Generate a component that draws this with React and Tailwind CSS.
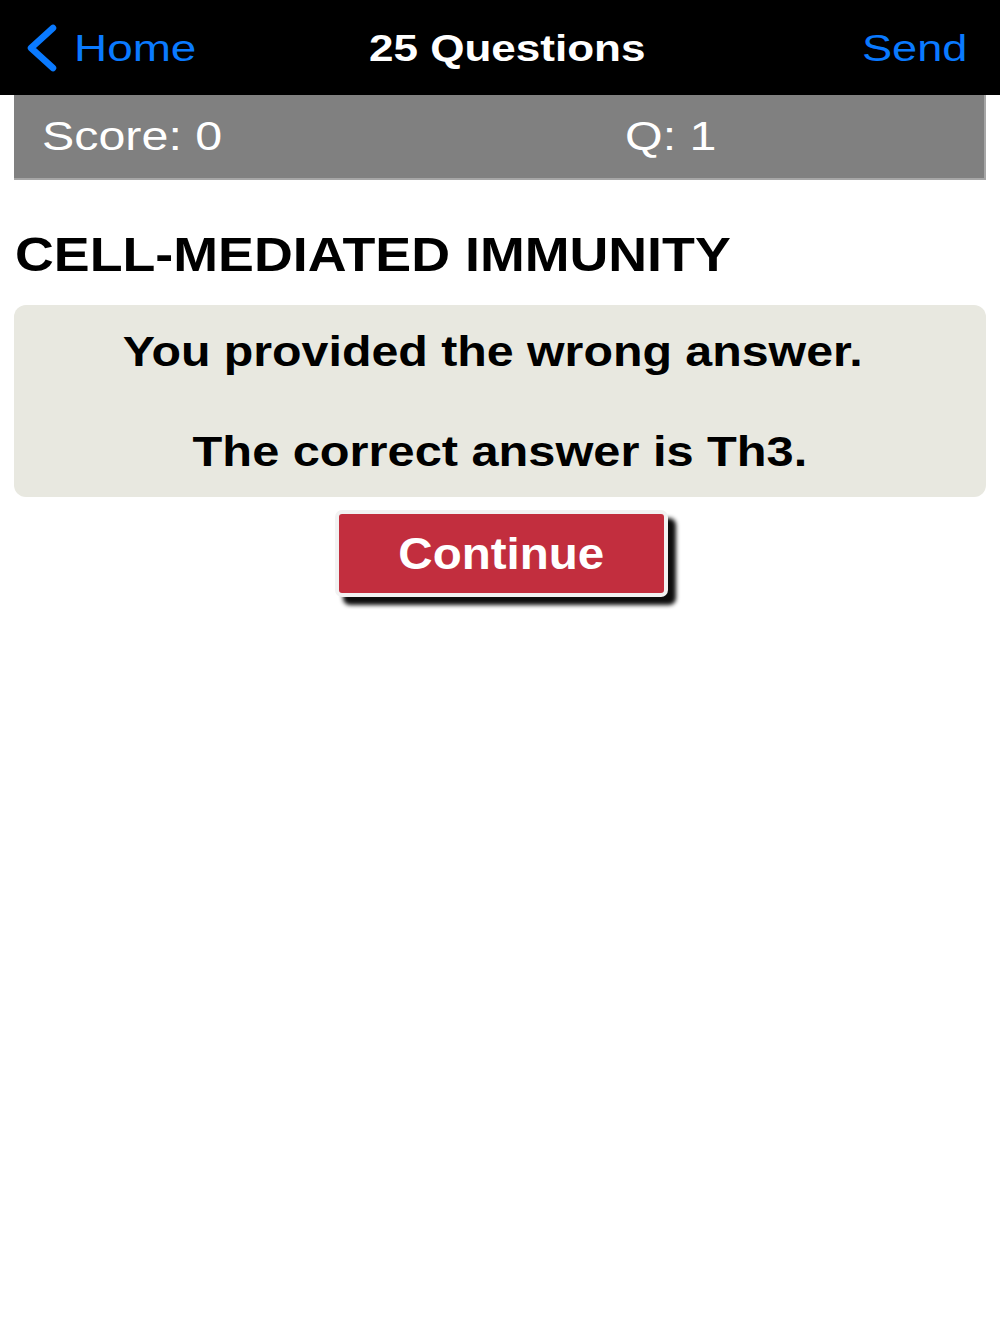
import { useState } from 'react';

const sans = { fontFamily: '"Liberation Sans", Arial, sans-serif' };

function Chevron() {
    return (
        <svg width="36" height="48" viewBox="0 0 36 48" fill="none" className="shrink-0">
            <path d="M30 4 L8 24 L30 44" stroke="#0a7aff" strokeWidth="6.5" strokeLinecap="round" strokeLinejoin="round" />
        </svg>
    );
}

export default function App() {
    const [score] = useState(0);
    const [question] = useState(1);

    return (
        <div className="min-h-[1334px] bg-white" style={sans}>
            {/* Nav bar */}
            <div className="h-[95px] bg-black grid grid-cols-[1fr_auto_1fr] items-center pl-[23px] pr-[33px]">
                <button className="flex items-center gap-[15px] text-[#0a7aff] justify-self-start">
                    <Chevron />
                    <span className="inline-block text-[37px] leading-none origin-left scale-x-[1.24] mt-[2px]">Home</span>
                </button>
                <h1 className="text-white font-bold text-[37px] leading-none inline-block scale-x-[1.19] ml-[24px] mt-[2px]">25 Questions</h1>
                <button className="text-[#0a7aff] text-[37px] leading-none inline-block origin-right scale-x-[1.22] mt-[2px] justify-self-end">Send</button>
            </div>

            {/* Score bar */}
            <div className="mx-[14px] h-[85px] bg-[#808080] border-r-2 border-b-2 border-[#a6a6a6] flex items-center text-white text-[41px] leading-none">
                <span className="inline-block origin-left scale-x-[1.18] ml-[28px] w-[583px]">Score: {score}</span>
                <span className="inline-block origin-left scale-x-[1.18]">Q: {question}</span>
            </div>

            {/* Title */}
            <h2 className="mt-[51px] ml-[15px] text-[48px] leading-none font-bold text-black inline-block origin-left scale-x-[1.12]">
                CELL-MEDIATED IMMUNITY
            </h2>

            {/* Result box */}
            <div className="mx-[14px] mt-[26px] h-[192px] rounded-[12px] bg-[#e8e8e0] flex flex-col items-center pt-[26px] gap-[58px] text-black font-bold text-[42px] leading-none">
                <p className="inline-block scale-x-[1.15] mr-[14px]">You provided the wrong answer.</p>
                <p className="inline-block scale-x-[1.16]">The correct answer is Th3.</p>
            </div>

            {/* Continue */}
            <div className="flex justify-center mt-[13px]">
                <button className="w-[333px] h-[87px] rounded-[7px] border-[4px] border-[#f2f2f2] bg-[#c22e3e] text-white font-bold text-[44px] leading-none shadow-[8px_8px_4px_rgba(0,0,0,0.95)] flex items-center justify-center ml-[2px]">
                    <span className="inline-block scale-x-[1.08]">Continue</span>
                </button>
            </div>
        </div>
    );
}
